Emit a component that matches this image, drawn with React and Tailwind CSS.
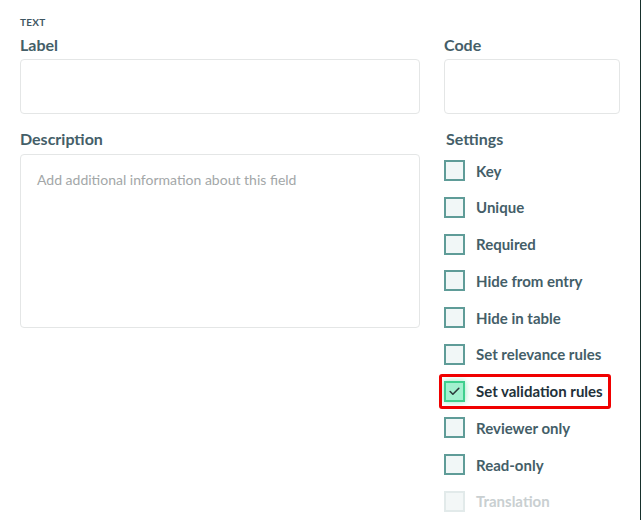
import { Check } from 'lucide-react'

const settings = [
  { label: 'Key' },
  { label: 'Unique' },
  { label: 'Required' },
  { label: 'Hide from entry' },
  { label: 'Hide in table' },
  { label: 'Set relevance rules' },
  { label: 'Set validation rules', checked: true, highlight: true },
  { label: 'Reviewer only' },
  { label: 'Read-only' },
  { label: 'Translation', disabled: true },
]

function Setting({ label, checked, highlight, disabled }) {
  return (
    <div className="relative flex items-center h-[21px]">
      {highlight && (
        <span className="absolute left-[-5px] top-[-7px] w-[172px] h-[35px] border-[3px] border-[#f00000] rounded-[3px]" />
      )}
      {checked ? (
        <span className="flex items-center justify-center w-[21px] h-[21px] border-2 border-[#3fcf8e] bg-[#a2f1cf] shadow-[0_0_6px_rgba(60,210,140,0.55)]">
          <Check size={13} strokeWidth={3} className="text-[#2b3b3c]" />
        </span>
      ) : (
        <span
          className={`w-[21px] h-[21px] border-2 ${
            disabled ? 'border-[#e2eaea] bg-[#f3f7f7]' : 'border-[#5f9c98] bg-[#f1f7f7]'
          }`}
        />
      )}
      <span
        className={`ml-[11px] text-[15px] font-bold leading-5 ${
          checked ? 'text-[#22313a]' : disabled ? 'text-[#c9cfd1]' : 'text-[#445e68]'
        }`}
      >
        {label}
      </span>
    </div>
  )
}

export default function App() {
  return (
    <div className="flex w-[641px] h-[520px] bg-white font-['Lato','Noto_Sans',sans-serif] overflow-hidden">
      <div className="flex-1 pl-5 pt-4 border-r border-[#17302c]">
        <div className="text-[10px] leading-3 font-bold tracking-wide text-[#3e5661]">TEXT</div>

        <div className="flex gap-6 mt-[7px]">
          <div className="w-[400px]">
            <label className="block text-[16px] leading-5 font-bold text-[#445e68] mb-1">Label</label>
            <div className="h-[55px] border border-[#e4e6e6] rounded" />

            <label className="block mt-[15px] text-[16px] leading-5 font-bold text-[#445e68] mb-[5px]">
              Description
            </label>
            <div className="h-[174px] border border-[#e4e6e6] rounded px-4 pt-[15px] text-[14px] leading-5 text-[#a3a7a8]">
              Add additional information about this field
            </div>
          </div>

          <div className="w-[176px]">
            <label className="block text-[16px] leading-5 font-bold text-[#445e68] mb-1">Code</label>
            <div className="h-[55px] border border-[#e4e6e6] rounded" />

            <label className="block mt-[15px] ml-[2px] text-[16px] leading-5 font-bold text-[#445e68]">
              Settings
            </label>
            <div className="mt-[11px] flex flex-col gap-[15.75px]">
              {settings.map((s) => (
                <Setting key={s.label} {...s} />
              ))}
            </div>
          </div>
        </div>
      </div>
    </div>
  )
}
